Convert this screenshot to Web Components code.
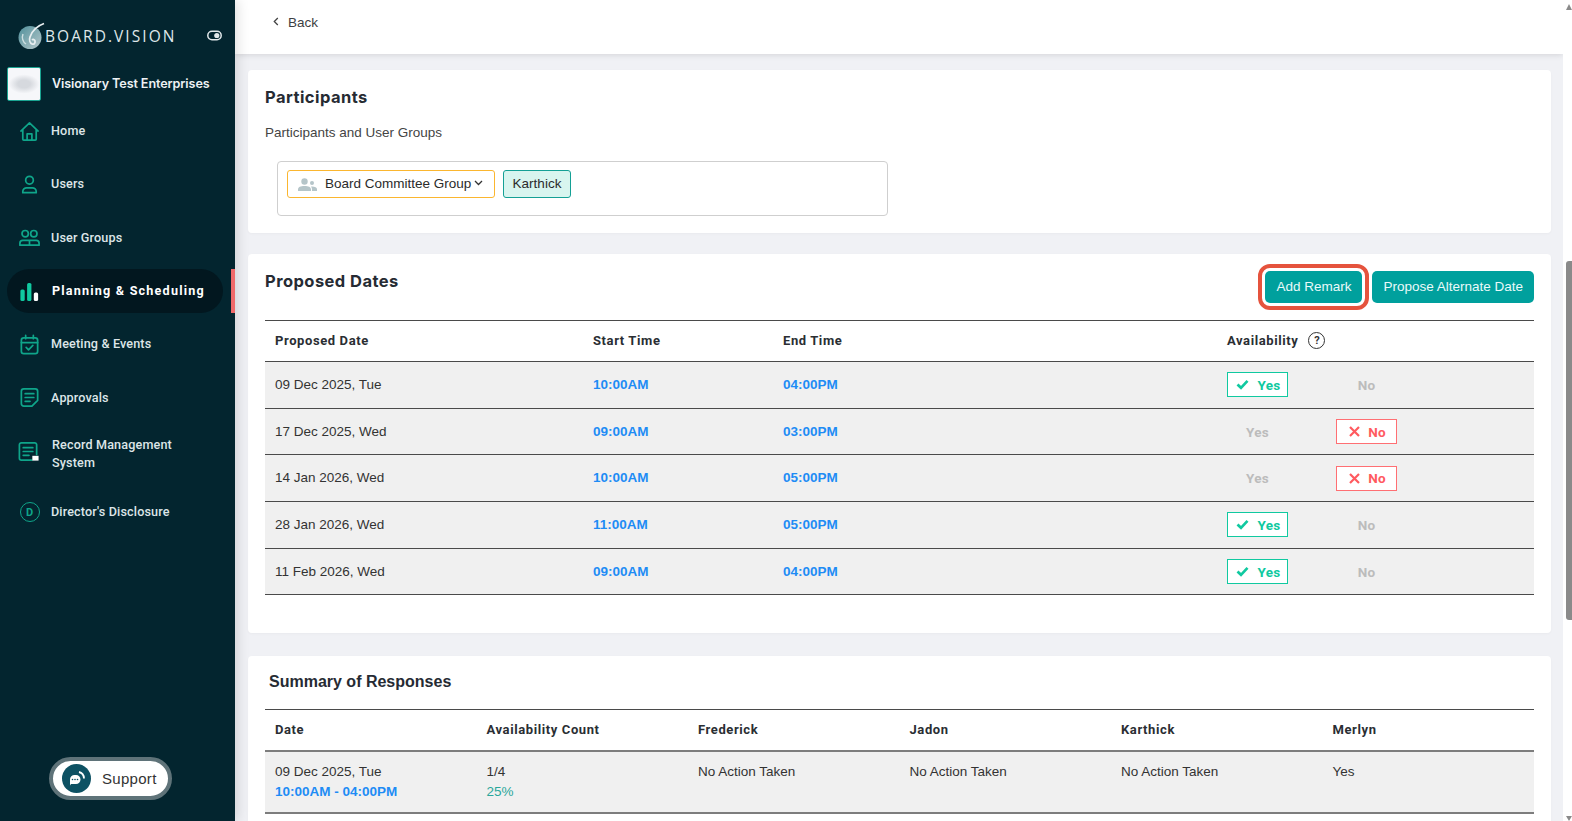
<!DOCTYPE html>
<html lang="en">
<head>
<meta charset="utf-8">
<title>Board.Vision</title>
<style>
  html, body { margin: 0; height: 100%; overflow: hidden; }
  body { font-family: "Liberation Sans", Arial, sans-serif; }
</style>
</head>
<body>
<bv-app>
  <bv-sidebar slot="sidebar">
    <bv-nav-item icon="home">Home</bv-nav-item>
    <bv-nav-item icon="user">Users</bv-nav-item>
    <bv-nav-item icon="group">User Groups</bv-nav-item>
    <bv-nav-item icon="chart" active>Planning &amp; Scheduling</bv-nav-item>
    <bv-nav-item icon="calendar">Meeting &amp; Events</bv-nav-item>
    <bv-nav-item icon="note">Approvals</bv-nav-item>
    <bv-nav-item icon="record" tall>Record Management System</bv-nav-item>
    <bv-nav-item icon="disclosure">Director's Disclosure</bv-nav-item>
  </bv-sidebar>

  <bv-topbar></bv-topbar>

  <bv-card heading="Participants" style="margin-top:16px">
    <bv-participants></bv-participants>
  </bv-card>

  <bv-card heading="Proposed Dates" style="margin-top:21px">
    <bv-button slot="actions" marked>Add Remark</bv-button>
    <bv-button slot="actions">Propose Alternate Date</bv-button>
    <bv-dates-table></bv-dates-table>
  </bv-card>

  <bv-card heading="Summary of Responses" plain style="margin-top:23px">
    <bv-summary-table></bv-summary-table>
  </bv-card>
</bv-app>

<script>
  // ICONS //
  const NAV_ICONS = {
    home: `<path d="M3 11.5 12 3l9 8.5M5 9.800V20a1 1 0 0 0 1 1h12a1 1 0 0 0 1-1V9.800M9.500 21v-6.500h5V21"/>`,
    user: `<circle cx="12" cy="7.500" r="4"/><path d="M5 20.500v-1.200c0-2.200 1.800-3.800 4-3.800h6c2.200 0 4 1.600 4 3.800v1.200z"/>`,
    group: `<circle cx="7.500" cy="8" r="3.300"/><circle cx="16.500" cy="8" r="3.300"/><path d="M2 20v-2c0-1.800 1.400-3 3-3h14c1.600 0 3 1.200 3 3v2zM12 15v5"/>`,
    chart: `<rect x="2.500" y="10" width="4.500" height="12" rx="1.600" fill="#10c9a0" stroke="none"/><rect x="9.500" y="3" width="4.500" height="19" rx="1.600" fill="#10c9a0" stroke="none"/><rect x="16.500" y="13" width="4.500" height="9" rx="1.600" fill="#fff" stroke="none"/>`,
    calendar: `<rect x="3.500" y="5" width="17" height="16.500" rx="2.500"/><path d="M3.500 10h17M8 2.500V6M16 2.500V6M8.500 15l2.500 2.500 4.500-4.500"/>`,
    note: `<path d="M6 3h12a2.500 2.500 0 0 1 2.500 2.500V15L14.500 21H6a2.500 2.500 0 0 1-2.500-2.500v-13A2.500 2.500 0 0 1 6 3zM7.500 8h9M7.500 12h9M7.500 16h5"/>`,
    record: `<path d="M20.500 15V5a2 2 0 0 0-2-2H4.500a2 2 0 0 0-2 2v14a2 2 0 0 0 2 2h11M6.500 8h10M6.500 12h10M6.500 16h6"/><rect x="16" y="16.500" width="6.500" height="5" fill="#fff" stroke="none"/>`
  };

  /**
   * Page frame: sidebar on the left, scrolled content and scrollbar on the right
   */
  class BvApp extends HTMLElement {
    constructor() {
      super();
      this.attachShadow({mode: 'open'}).innerHTML = `
        <style>
          :host { display: flex; width: 1572px; height: 821px; overflow: hidden; background: #f0f1f5; }
          .content { flex: 1; min-width: 0; height: 821px; overflow: hidden; display: flex; flex-direction: column; }
          .scrollbar { flex: none; width: 9px; background: #fff; display: flex; flex-direction: column; align-items: flex-end; }
          .arrow { width: 0; height: 0; border-left: 3px solid transparent; border-right: 3px solid transparent; }
          .arrow.up { margin-top: 4px; border-bottom: 6px solid #8a8a8a; }
          .arrow.down { margin-top: 196px; border-top: 5px solid #8a8a8a; }
          .thumb { width: 6px; height: 359px; margin-top: 251px; background: #8a8a8a; border-radius: 3px 0 0 3px; }
        </style>
        <slot name="sidebar"></slot>
        <div class="content"><slot></slot></div>
        <div class="scrollbar">
          <div class="arrow up"></div>
          <div class="thumb"></div>
          <div class="arrow down"></div>
        </div>
      `;
    }
  }
  customElements.define('bv-app', BvApp);

  /**
   * Dark navigation column
   */
  class BvSidebar extends HTMLElement {
    constructor() {
      super();
      this.attachShadow({mode: 'open'}).innerHTML = `
        <style>
          :host {
            flex: none; display: flex; flex-direction: column; width: 235px; height: 821px;
            background: #03252f; box-shadow: 2px 0 12px rgba(0,0,0,.14); position: relative; z-index: 2;
          }
          .brand { display: flex; align-items: center; height: 67px; padding: 4px 13px 0 17px; box-sizing: border-box; }
          .brand svg.logo { flex: none; }
          .word { margin-left: 0; font: 400 15.500px "Open Sans", sans-serif; letter-spacing: 2.05px; color: #dfe7ea; white-space: nowrap; }
          .eye { margin-left: auto; }
          .org { display: flex; align-items: center; height: 34px; padding-left: 7px; }
          .org-logo {
            flex: none; width: 32px; height: 32px; border: 1px solid #1aa391; border-radius: 2px;
            background: radial-gradient(ellipse 48% 30% at 50% 50%, #d6d9de 40%, #f6f7fa 100%);
          }
          .org-name { margin: -2px 0 0 11px; font: 600 12.600px Inter, sans-serif; letter-spacing: -.1px; color: #eef2f4; white-space: nowrap; }
          nav { display: flex; flex-direction: column; margin-top: 3.500px; }
          .support {
            display: flex; align-items: center; align-self: flex-start; box-sizing: border-box;
            width: 123px; height: 43px; margin: auto 0 21px 49px; padding-left: 9px;
            background: #fff; border: 4px solid #5f7379; border-radius: 22px;
            font: 400 15px "Liberation Sans", sans-serif; letter-spacing: .3px; color: #333;
          }
          .bubble {
            flex: none; display: grid; place-items: center; width: 29px; height: 29px;
            margin-right: 11px; border-radius: 50%; background: #0d5163;
          }
        </style>
        <div class="brand">
          <svg class="logo" width="28" height="28" viewBox="0 0 28 28">
            <defs><linearGradient id="orb" x1="0" y1="0" x2="1" y2="1"><stop offset="0" stop-color="#4f8f9a"/><stop offset="1" stop-color="#b7c8cb"/></linearGradient></defs>
            <circle cx="13" cy="15.500" r="11.500" fill="url(#orb)"/>
            <path d="M27 1.500C20 4 15 9 13 15c-1 3 0 6 2 7 2 .8 3.500-1 3-3-.4-1.600-2-2-3-1" fill="none" stroke="#e8eef0" stroke-width="1.800"/>
            <path d="M6 12c-1.500 4 0 8 3 10" fill="none" stroke="#cfe0e2" stroke-width="1.500"/>
          </svg>
          <span class="word">BOARD.VISION</span>
          <svg class="eye" width="15" height="11" viewBox="0 0 15 11">
            <rect x=".8" y="1.300" width="13.400" height="8.400" rx="4.200" fill="none" stroke="#e2e9eb" stroke-width="1.500"/>
            <circle cx="9.800" cy="5.500" r="2.600" fill="#e2e9eb"/>
          </svg>
        </div>
        <div class="org">
          <div class="org-logo"></div>
          <span class="org-name">Visionary Test Enterprises</span>
        </div>
        <nav><slot></slot></nav>
        <div class="support">
          <span class="bubble">
            <svg width="20" height="20" viewBox="0 0 20 20">
              <path d="M3 10.500a4.500 4.500 0 0 1 4.500-4.500h1.500a4.500 4.500 0 0 1 0 9H4l-1 1.500z" fill="#fff"/>
              <path d="M12 3c2.800.6 4.800 3 5 6.500" fill="none" stroke="#fff" stroke-width="1.800"/>
              <circle cx="5.500" cy="10.500" r=".8" fill="#0d5163"/><circle cx="8" cy="10.500" r=".8" fill="#0d5163"/><circle cx="10.500" cy="10.500" r=".8" fill="#0d5163"/>
            </svg>
          </span>
          Support
        </div>
      `;
    }
  }
  customElements.define('bv-sidebar', BvSidebar);

  /**
   * Sidebar link. icon attribute picks from NAV_ICONS
   */
  class BvNavItem extends HTMLElement {
    constructor() {
      super();
      const icon = this.getAttribute('icon');
      const glyph = icon === 'disclosure'
        ? `<span class="disc">D</span>`
        : `<svg width="23" height="23" viewBox="0 0 24 24" fill="none" stroke="#0fa58a" stroke-width="1.800" stroke-linecap="round" stroke-linejoin="round">${ NAV_ICONS[icon] }</svg>`;
      this.attachShadow({mode: 'open'}).innerHTML = `
        <style>
          :host { display: block; position: relative; height: 53.300px; }
          :host([tall]) { height: 61.500px; }
          :host([active]) { display: flex; align-items: center; }
          :host([active]) .row { flex: 1; height: 44px; margin: 0 12px 0 7px; padding-left: 11px; background: #02171f; border-radius: 22px; }
          :host([active]) .label { width: auto; white-space: nowrap; font-weight: 700; letter-spacing: 1.200px; color: #fff; margin-left: 1px; }
          :host([active])::after {
            content: ""; position: absolute; right: 0; top: 4.500px; width: 4px; height: 44px; background: #f06a6a;
          }
          :host(:not([active])) .row { height: 100%; padding-left: 18px; }
          .row { display: flex; align-items: center; box-sizing: border-box; }
          .icon { flex: none; display: grid; place-items: center; width: 23px; height: 23px; margin-right: 10px; }
          .label { width: 135px; font: 500 12.600px/18px Roboto, sans-serif; letter-spacing: .15px; color: #dde5e8; }
          :host(:not([tall]):not([active])) .label { width: auto; white-space: nowrap; }
          :host([tall]) .icon { margin-top: -8px; margin-left: -1px; margin-right: 12px; }
          :host([tall]) .label { margin-top: -2px; }
          .disc {
            display: grid; place-items: center; box-sizing: border-box; width: 20px; height: 20px;
            border: 1.500px solid #0fa58a; border-radius: 50%;
            font: 700 11px Roboto, sans-serif; color: #0fa58a;
          }
        </style>
        <div class="row">
          <span class="icon">${ glyph }</span>
          <span class="label"><slot></slot></span>
        </div>
      `;
    }
  }
  customElements.define('bv-nav-item', BvNavItem);

  /**
   * White strip with the back link
   */
  class BvTopbar extends HTMLElement {
    constructor() {
      super();
      this.attachShadow({mode: 'open'}).innerHTML = `
        <style>
          :host {
            flex: none; display: flex; align-items: center; height: 54px; padding: 0 0 10px 38px; box-sizing: border-box;
            background: #fff; box-shadow: 0 1px 6px rgba(0,0,0,.12);
            font: 400 13.500px "Liberation Sans", sans-serif; color: #3c4043;
          }
          svg { margin-right: 9px; margin-top: -2px; }
        </style>
        <svg width="6" height="9" viewBox="0 0 6 9" fill="none" stroke="#444" stroke-width="1.300"><path d="M4.800 1 1.300 4.500l3.500 3.500"/></svg>
        Back
      `;
    }
  }
  customElements.define('bv-topbar', BvTopbar);

  /**
   * White panel with a heading, optional actions and a body
   */
  class BvCard extends HTMLElement {
    constructor() {
      super();
      this.attachShadow({mode: 'open'}).innerHTML = `
        <style>
          :host {
            flex: none; display: block; width: 1303px; margin-left: 13px; box-sizing: border-box;
            padding: 17px 17px 0; background: #fff; border-radius: 4px; box-shadow: 0 1px 3px rgba(0,0,0,.03);
          }
          header { display: flex; justify-content: space-between; align-items: flex-start; }
          h2 { margin: 0; font: 700 16.500px/20px Inter, sans-serif; letter-spacing: .45px; color: #262b33; }
          :host([plain]) { padding-top: 16px; }
          :host([plain]) h2 { margin-left: 4px; font: 700 16px/20px "Liberation Sans", sans-serif; letter-spacing: 0; }
          .actions { display: flex; gap: 10px; }
        </style>
        <header>
          <h2>${ this.getAttribute('heading') }</h2>
          <div class="actions"><slot name="actions"></slot></div>
        </header>
        <slot></slot>
      `;
    }
  }
  customElements.define('bv-card', BvCard);

  /**
   * Teal button. marked adds the red call-out frame
   */
  class BvButton extends HTMLElement {
    constructor() {
      super();
      this.attachShadow({mode: 'open'}).innerHTML = `
        <style>
          :host {
            display: flex; align-items: center; position: relative; box-sizing: border-box; height: 32px; padding: 0 11px 2px;
            background: #00a09d; border-radius: 5px;
            font: 400 13.500px "Liberation Sans", sans-serif; color: #eafafa; white-space: nowrap;
          }
          :host([marked])::after {
            content: ""; position: absolute; inset: -7px; border: 4px solid #e5533d; border-radius: 12px;
          }
        </style>
        <slot></slot>
      `;
    }
  }
  customElements.define('bv-button', BvButton);

  /**
   * Selected participants box
   */
  class BvParticipants extends HTMLElement {
    constructor() {
      super();
      this.attachShadow({mode: 'open'}).innerHTML = `
        <style>
          :host { display: block; padding-bottom: 17px; font: 400 13.500px/20px "Liberation Sans", sans-serif; color: #444; }
          .sub { margin-top: 16px; }
          .box {
            display: flex; gap: 8px; align-items: flex-start; box-sizing: border-box; width: 611px; height: 55px;
            margin: 18px 0 0 12px; padding: 8px 9px; border: 1px solid #cfcfcf; border-radius: 4px;
          }
          .chip {
            display: flex; align-items: center; box-sizing: border-box; height: 28px; border-radius: 3px; color: #2b2b2b;
          }
          .group { width: 208px; padding-left: 10px; border: 1px solid #fbb62f; background: #fff; }
          .group svg.people { margin-right: 8px; }
          .group svg.caret { margin: -2px 0 0 3px; }
          .person { width: 68px; justify-content: center; border: 1px solid #14a095; background: #d8f5ef; }
        </style>
        <div class="sub">Participants and User Groups</div>
        <div class="box">
          <div class="chip group">
            <svg class="people" width="19" height="13" viewBox="0 0 19 13" fill="#b5c5c9">
              <circle cx="6.500" cy="3.500" r="3.200"/><circle cx="14" cy="5" r="2"/>
              <path d="M0 13v-1.500C0 9 2.500 8 6.500 8s6.500 1 6.500 3.500V13zM14 13v-2c0-1-.5-1.800-1-2.500 3-.3 6 .5 6 2.500v2z"/>
            </svg>
            Board Committee Group
            <svg class="caret" width="9" height="6" viewBox="0 0 9 6" fill="none" stroke="#333" stroke-width="1.300"><path d="m1 1 3.500 3.500L8 1"/></svg>
          </div>
          <div class="chip person">Karthick</div>
        </div>
      `;
    }
  }
  customElements.define('bv-participants', BvParticipants);

  /**
   * Yes / No answer. chosen draws the coloured box, otherwise a grey word
   */
  class BvAnswer extends HTMLElement {
    constructor() {
      super();
      const yes = this.getAttribute('value') === 'Yes';
      const mark = !this.hasAttribute('chosen') ? '' : yes
        ? `<svg width="13" height="11" viewBox="0 0 13 11" fill="none" stroke="#10c9a0" stroke-width="2.700"><path d="m1.500 5.500 3.500 3.300 6.500-7"/></svg>`
        : `<svg width="11" height="11" viewBox="0 0 11 11" fill="none" stroke="#ff5a5f" stroke-width="2.200"><path d="m1 1 9 9M10 1l-9 9"/></svg>`;
      this.attachShadow({mode: 'open'}).innerHTML = `
        <style>
          :host {
            display: flex; align-items: center; justify-content: center; gap: 8px; box-sizing: border-box;
            width: 61px; height: 25px; border: 1px solid transparent;
            font: 700 13.500px Roboto, sans-serif; letter-spacing: .3px; color: #bcbcbc;
          }
          :host([chosen]) { background: #fff; padding-left: 2px; }
          :host([chosen][value="Yes"]) { border-color: #10c9a0; color: #10c9a0; }
          :host([chosen][value="No"]) { border-color: #ff6f73; color: #ff5a5f; }
        </style>
        ${ mark }<slot>${ this.getAttribute('value') }</slot>
      `;
    }
  }
  customElements.define('bv-answer', BvAnswer);

  const TABLE_STYLE = `
    table { width: 100%; border-collapse: collapse; table-layout: fixed; }
    th {
      height: 41px; padding: 0 10px 2px; box-sizing: border-box; text-align: left;
      font: 700 13px Roboto, sans-serif; letter-spacing: .6px; color: #2a2e33;
      border-top: 1px solid #4a4a4a; border-bottom: 1px solid #4a4a4a;
    }
    td { padding: 0 10px; background: #f0f0f0; border-bottom: 1px solid #4a4a4a; font: 400 13.500px "Liberation Sans", sans-serif; color: #333; }
    .time { font-weight: 700; font-size: 13.500px; color: #1e8cf5; }
  `;

  /**
   * Proposed dates with a yes / no pick for each row
   */
  class BvDatesTable extends HTMLElement {
    #rows = [
      ['09 Dec 2025, Tue', '10:00AM', '04:00PM', 'Yes'],
      ['17 Dec 2025, Wed', '09:00AM', '03:00PM', 'No'],
      ['14 Jan 2026, Wed', '10:00AM', '05:00PM', 'No'],
      ['28 Jan 2026, Wed', '11:00AM', '05:00PM', 'Yes'],
      ['11 Feb 2026, Wed', '09:00AM', '04:00PM', 'Yes']
    ];

    constructor() {
      super();
      const body = this.#rows.map(([date, start, end, pick]) => `
        <tr>
          <td>${ date }</td>
          <td class="time">${ start }</td>
          <td class="time">${ end }</td>
          <td class="pick" colspan="2">
            <div class="answers">
              <bv-answer value="Yes" ${ pick === 'Yes' ? 'chosen' : '' }></bv-answer>
              <bv-answer value="No" ${ pick === 'No' ? 'chosen' : '' }></bv-answer>
            </div>
          </td>
        </tr>`).join('');
      this.attachShadow({mode: 'open'}).innerHTML = `
        <style>
          :host { display: block; margin-top: 17px; padding-bottom: 38px; }
          ${ TABLE_STYLE }
          tbody tr { height: 46.700px; }
          td { padding-bottom: 1px; box-sizing: border-box; }
          .pick { padding: 0 0 0 0; }
          .answers { display: flex; gap: 48px; }
          .avail { display: flex; align-items: center; gap: 10px; }
          .help {
            display: grid; place-items: center; box-sizing: border-box; width: 17px; height: 17px;
            border: 1.500px solid #333; border-radius: 50%; font: 700 11px Roboto, sans-serif; letter-spacing: 0; color: #333;
          }
          th.av { padding: 0 0 2px; }
        </style>
        <table>
          <colgroup><col style="width:318px"><col style="width:190px"><col style="width:454px"><col></colgroup>
          <thead>
            <tr>
              <th>Proposed Date</th>
              <th>Start Time</th>
              <th>End Time</th>
              <th class="av" colspan="2"><div class="avail">Availability <span class="help">?</span></div></th>
            </tr>
          </thead>
          <tbody>${ body }</tbody>
        </table>
      `;
    }
  }
  customElements.define('bv-dates-table', BvDatesTable);

  /**
   * Who answered what, cut off by the bottom of the window
   */
  class BvSummaryTable extends HTMLElement {
    constructor() {
      super();
      this.attachShadow({mode: 'open'}).innerHTML = `
        <style>
          :host { display: block; margin-top: 17px; padding-bottom: 30px; }
          ${ TABLE_STYLE }
          th { height: 41px; border-bottom: 2px solid #7d7d7d; }
          td { height: 62px; padding-top: 10px; box-sizing: border-box; vertical-align: top; line-height: 20.500px; border-bottom: 2px solid #7d7d7d; }
          .pct { color: #2aa79b; }
        </style>
        <table>
          <thead>
            <tr>
              <th>Date</th>
              <th>Availability Count</th>
              <th>Frederick</th>
              <th>Jadon</th>
              <th>Karthick</th>
              <th>Merlyn</th>
            </tr>
          </thead>
          <tbody>
            <tr>
              <td>09 Dec 2025, Tue<br><span class="time">10:00AM - 04:00PM</span></td>
              <td>1/4<br><span class="pct">25%</span></td>
              <td>No Action Taken</td>
              <td>No Action Taken</td>
              <td>No Action Taken</td>
              <td>Yes</td>
            </tr>
          </tbody>
        </table>
      `;
    }
  }
  customElements.define('bv-summary-table', BvSummaryTable);
</script>
</body>
</html>
